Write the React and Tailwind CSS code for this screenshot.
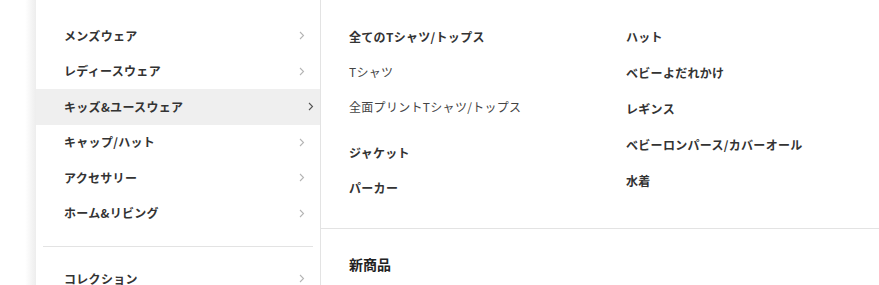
import React from "react";

const categories = [
  { label: "メンズウェア" },
  { label: "レディースウェア" },
  { label: "キッズ&ユースウェア", active: true },
  { label: "キャップ/ハット" },
  { label: "アクセサリー" },
  { label: "ホーム&リビング" },
];

const Chevron = ({ active }) => (
  <svg
    width="6"
    height="9"
    viewBox="0 0 6 9"
    fill="none"
    className={active ? "translate-x-[9px]" : ""}
  >
    <polyline
      points="1,1 4.5,4.5 1,8"
      stroke={active ? "#555" : "#b5b5b5"}
      strokeWidth="1.1"
    />
  </svg>
);

const CategoryRow = ({ label, active }) => (
  <div
    className={`flex items-center justify-between h-[35.5px] pl-[28px] pr-[15px] ${
      active ? "bg-[#efefef]" : ""
    }`}
  >
    <span className="text-[12px] font-bold text-[#333] tracking-[0.3px]">{label}</span>
    <Chevron active={active} />
  </div>
);

const colA = [
  { label: "全てのTシャツ/トップス", bold: true, mt: "mt-0" },
  { label: "Tシャツ", bold: false, mt: "mt-0" },
  { label: "全面プリントTシャツ/トップス", bold: false, mt: "mt-0" },
  { label: "ジャケット", bold: true, mt: "mt-[11px]" },
  { label: "パーカー", bold: true, mt: "mt-0" },
];

const colB = ["ハット", "ベビーよだれかけ", "レギンス", "ベビーロンパース/カバーオール", "水着"];

export default function App() {
  return (
    <div
      className="w-[879px] h-[285px] overflow-hidden bg-white flex"
      style={{ fontFamily: '"Noto Sans CJK JP", "Noto Sans", sans-serif' }}
    >
      <div className="w-[36px] shrink-0 bg-gradient-to-r from-white from-70% to-[#ededed]" />
      <div className="w-[285px] shrink-0 pt-[18px] border-r border-[#e3e3e3]">
        {categories.map((c) => (
          <CategoryRow key={c.label} label={c.label} active={c.active} />
        ))}
        <div className="mx-[7px] mt-[15px] mb-[14px] border-t border-[#e3e3e3]" />
        <CategoryRow label="コレクション" />
      </div>
      <div className="flex-1 flex flex-col">
        <div className="flex pl-[28px] pt-[19px] h-[228px]">
          <div className="w-[277px] flex flex-col">
            {colA.map((i) => (
              <div
                key={i.label}
                className={`h-[35px] flex items-center text-[12px] tracking-[0.3px] ${i.mt} ${
                  i.bold ? "font-bold text-[#333]" : "font-normal text-[#444]"
                }`}
              >
                {i.label}
              </div>
            ))}
          </div>
          <div className="flex flex-col">
            {colB.map((l) => (
              <div
                key={l}
                className="h-[36px] flex items-center text-[12px] font-bold text-[#333] tracking-[0.3px]"
              >
                {l}
              </div>
            ))}
          </div>
        </div>
        <div className="border-t border-[#e3e3e3]" />
        <div className="pl-[28px] pt-[25px] text-[14px] font-bold text-[#222]">新商品</div>
      </div>
    </div>
  );
}
